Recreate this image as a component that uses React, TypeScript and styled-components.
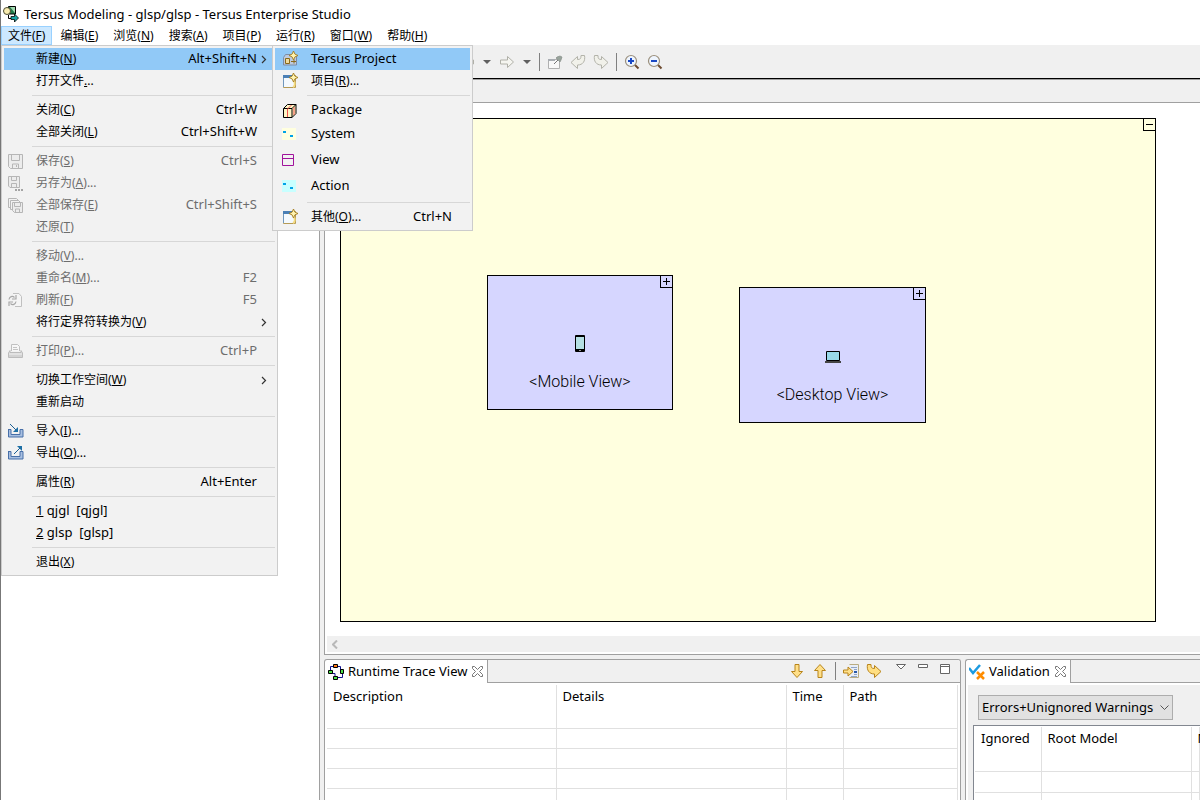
import React from "react";
import styled, { createGlobalStyle, css } from "styled-components";

const line = "#a0a0a0";
const face = "#f0f0f0";

const GlobalStyle = createGlobalStyle`
  * { box-sizing: border-box; }
  body { margin: 0; background: #fff; }
  body, button, select, table {
    font-family: "Noto Sans", "Noto Sans CJK SC", sans-serif;
    font-size: 13px;
    line-height: 16px;
    color: #000;
  }
  button { border: 0; padding: 0; background: none; text-align: left; }
  svg { display: block; flex: none; }
  h1, h2 { margin: 0; font-size: 13px; font-weight: 400; }
`;

const Window = styled.div`
  position: relative;
  display: flex;
  flex-direction: column;
  height: 100vh;
  overflow: hidden;
  border-left: 1px solid #777;
`;
const TitleBar = styled.header`
  display: flex;
  align-items: center;
  gap: 5px;
  height: 26px;
  flex: none;
  padding: 2px 0 0 2px;
`;
const MenuBar = styled.nav`
  display: flex;
  gap: 1px;
  height: 19px;
  flex: none;
`;
const MenuBarItem = styled.button<{ $open?: boolean }>`
  padding: 0 7px;
  font-size: 12px;
  background: ${(p) => (p.$open ? "#cce8ff" : "transparent")};
  box-shadow: inset 0 0 0 1px ${(p) => (p.$open ? "#99d1ff" : "transparent")};
`;
const Toolbar = styled.div`
  display: flex;
  align-items: center;
  gap: 7px;
  height: 33px;
  flex: none;
  padding-left: 458px;
  background: ${face};
`;
const ToolButton = styled.button`
  display: flex;
  align-items: center;
  justify-content: center;
  width: 16px;
  height: 16px;
`;
const CaretButton = styled(ToolButton)`
  width: 10px;
`;
const Divider = styled.span`
  width: 1px;
  height: 18px;
  background: #808080;
`;
const Workbench = styled.div`
  display: flex;
  flex: 1;
  min-height: 0;
  background: ${face};
  gap: 4px;
`;
const Explorer = styled.aside`
  flex: none;
  width: 319px;
  background: #fff;
  border-right: 1px solid ${line};
  border-top: 1px solid #000;
`;
const Main = styled.main`
  display: flex;
  flex-direction: column;
  flex: 1;
  min-width: 0;
  gap: 4px;
`;
const Editor = styled.section`
  flex: none;
  display: flex;
  flex-direction: column;
  border: solid ${line};
  border-width: 0 0 1px 1px;
  background: #fff;
`;
const EditorTabs = styled.div`
  height: 25px;
  border-top: 1px solid #000;
  border-bottom: 1px solid ${line};
  background: ${face};
  box-shadow: inset 0 1px ${line};
`;
const Canvas = styled.div`
  padding: 15px 44px 14px 15px;
`;
const Diagram = styled.div`
  position: relative;
  height: 504px;
  border: 1px solid #000;
  background: #ffffdf;
`;
const Fold = styled.button`
  position: absolute;
  top: -1px;
  right: -1px;
  width: 13px;
  height: 13px;
  border: 1px solid #000;
`;
const Node = styled.article<{ $x: number; $y: number; $w: number; $h: number }>`
  position: absolute;
  left: ${(p) => p.$x}px;
  top: ${(p) => p.$y}px;
  width: ${(p) => p.$w}px;
  height: ${(p) => p.$h}px;
  display: flex;
  flex-direction: column;
  align-items: center;
  justify-content: flex-end;
  gap: 20px;
  padding-bottom: 17px;
  border: 1px solid #000;
  background: #d6d6ff;
`;
const NodeIcon = styled.span`
  display: flex;
  align-items: center;
  height: 17px;
`;
const NodeName = styled.span`
  font: 300 16px/20px Roboto, sans-serif;
  white-space: nowrap;
`;
const ScrollTrack = styled.div`
  display: flex;
  align-items: center;
  height: 16px;
  margin: 0 0 2px 2px;
  padding-left: 5px;
  background: ${face};
`;
const Bottom = styled.div`
  display: flex;
  flex: 1;
  min-height: 0;
  gap: 4px;
`;
const Panel = styled.section<{ $fixed?: boolean }>`
  display: flex;
  flex-direction: column;
  min-width: 0;
  overflow: hidden;
  flex: ${(p) => (p.$fixed ? "0 0 235px" : "1 1 0")};
  border: 1px solid ${line};
  border-bottom: 0;
  border-right-width: ${(p) => (p.$fixed ? 0 : 1)}px;
  border-radius: 3px ${(p) => (p.$fixed ? 0 : 3)}px 0 0;
  background: #fff;
`;
const TabStrip = styled.div`
  display: flex;
  height: 23px;
  flex: none;
`;
const Tab = styled.div`
  display: flex;
  align-items: center;
  gap: 4px;
  padding: 0 4px 0 3px;
  border-right: 1px solid ${line};
  h2 { padding: 0 1px 2px 0; white-space: nowrap; }
`;
const TabTools = styled.div`
  display: flex;
  flex: 1;
  align-items: center;
  justify-content: flex-end;
  gap: 7px;
  padding-right: 7px;
  background: ${face};
  border-bottom: 1px solid ${line};
`;
const ViewButtons = styled.div`
  display: flex;
  gap: 6px;
  margin-left: 4px;
  button { align-items: flex-start; padding-top: 1px; }
`;
const Grid = styled.table<{ $head: number; $row: number }>`
  border-collapse: collapse;
  table-layout: fixed;
  width: 100%;
  th {
    height: ${(p) => p.$head}px;
    padding: 3px 6px;
    font-weight: 400;
    text-align: left;
    vertical-align: top;
    white-space: nowrap;
  }
  td { height: ${(p) => p.$row}px; padding: 0; }
  th, td { border-right: 1px solid #e0e0e0; border-bottom: 1px solid #e0e0e0; }
`;
const TraceBody = styled.div`
  padding: 2px;
`;
const ValidationBody = styled.div`
  flex: 1;
  margin: 2px 0 0 2px;
  padding: 10px 0 0 5px;
  background: ${face};
`;
const FilterBox = styled.div`
  position: relative;
  display: flex;
  align-items: center;
  width: 195px;
  margin: 0 0 5px 5px;
  svg { position: absolute; right: 4px; pointer-events: none; }
`;
const Filter = styled.select`
  appearance: none;
  width: 100%;
  height: 25px;
  padding: 0 3px 2px;
  border: 1px solid #adadad;
  border-radius: 0;
  background: #e1e1e1;
`;
const IssueFrame = styled.div`
  height: 100%;
  padding: 1px 0 0 1px;
  border: solid #828790;
  border-width: 1px 0 0 1px;
  background: #fff;
`;

const Popup = styled.div<{ $x: number; $w: number }>`
  position: absolute;
  left: ${(p) => p.$x}px;
  top: 45px;
  width: ${(p) => p.$w}px;
  padding: 2px;
  border: 1px solid #ccc;
  background: #f2f2f2;
`;
const MenuItem = styled.button<{ $active?: boolean; $tall?: boolean }>`
  display: flex;
  align-items: center;
  width: 100%;
  height: ${(p) => (p.$tall ? 26 : 22)}px;
  font-size: 12px;
  white-space: pre;
  &:disabled { color: #6d6d6d; }
  ${(p) => p.$active && css`background: #91c9f7;`}
`;
const IconSlot = styled.span<{ $w: number; $pad: number }>`
  flex: none;
  width: ${(p) => p.$w}px;
  padding-left: ${(p) => p.$pad}px;
`;
const Label = styled.span<{ $latin?: boolean }>`
  flex: 1;
  font-size: ${(p) => (p.$latin ? 13 : 12)}px;
  padding-bottom: ${(p) => (p.$latin ? 2 : 0)}px;
`;
const Shortcut = styled.span`
  font-size: 13px;
  padding-bottom: 2px;
`;
const ArrowSlot = styled.span`
  width: 18px;
  padding-left: 4px;
`;
const Separator = styled.hr<{ $inset: number }>`
  height: 1px;
  margin: 3px 0 3px ${(p) => p.$inset}px;
  border: 0;
  background: #d7d7d7;
`;

const Svg = ({ w = 16, h = 16, children }: { w?: number; h?: number; children: React.ReactNode }) => (
  <svg width={w} height={h} viewBox={`0 0 ${w} ${h}`} fill="none" aria-hidden="true">{children}</svg>
);

const AppIcon = () => (
  <Svg>
    <path d="M5.500.5h7v7.500h-7z" fill="#1f7a4a" stroke="#000" />
    <path d="M7 1l5 6V1z" fill="#9fd8ae" />
    <circle cx="4" cy="5" r="3.500" fill="#f8ecb0" stroke="#4a4a30" />
    <path d="M5.500 9v3.500H8" stroke="#000" />
    <path d="M8 10.500h3.500V8l4 4-4 4v-2.500H8z" fill="#17a5a5" stroke="#000" strokeWidth=".8" />
  </Svg>
);
const Star = () => <path d="M11.500 0l1.400 3.100L16 4.500l-3.100 1.400L11.500 9l-1.400-3.100L7 4.500l3.100-1.400z" fill="#fff3b0" stroke="#a17b1c" strokeWidth=".9" />;
const NewWindowIcon = () => (
  <Svg>
    <path d="M1.500 2.500h12v12h-12z" fill="#f4f9fd" stroke="#b59a55" />
    <path d="M1 2h9v3H1z" fill="#4a7fb5" />
    <path d="M1.500 5v9" stroke="#6f97bd" />
    <path d="M11 14c2-1 2-4 1-6" stroke="#f5dc82" strokeWidth="2" />
    <Star />
  </Svg>
);
const TersusProjectIcon = () => (
  <Svg>
    <path d="M1.500 6.500l2-3h5l1 1h5v9.500h-13z" fill="#bccadf" stroke="#7d8ca5" />
    <path d="M3.500 7.500h4v5h-4z" fill="#f0dca0" stroke="#8a6a1a" />
    <path d="M9 10.500h5M12 8.500v4" stroke="#8a6a1a" />
    <Star />
  </Svg>
);
const PackageIcon = () => (
  <Svg>
    <path d="M1.500 6.500l4-4h8.500v9l-4 4H1.500z" fill="#fff6c4" stroke="#000" />
    <path d="M1.500 6.500H10v9M10 6.500l4-4" stroke="#000" />
    <path d="M5.500 15V7l4-4M12 13V5" stroke="#f0524f" />
  </Svg>
);
const DotsIcon = ({ tint }: { tint: string }) => (
  <Svg>
    <path d="M0 2h14v12H0z" fill={tint} />
    <path d="M1 5h3v2H1zM8 9h3v2H8z" fill="#00a2e8" />
  </Svg>
);
const ViewIcon = () => (
  <Svg><path d="M.5 2.500h11v11H.5zM.5 6.500h11" stroke="#a0139c" /></Svg>
);
const SaveIcon = () => (
  <Svg>
    <path d="M.5 1.500h14v14h-12l-2-2z" stroke="#b6b6b6" fill="#ececec" />
    <path d="M3.500 1.500v6h8v-6M4.500 15v-4h6v4M8.500 12v2" stroke="#b6b6b6" />
  </Svg>
);
const SaveAsIcon = () => (
  <Svg>
    <path d="M.5 1.500h11v11H2l-1.500-1.500z" stroke="#b6b6b6" fill="#ececec" />
    <path d="M3.500 1.500v4h5v-4M3.500 12V8.500h5V12" stroke="#b6b6b6" />
    <path d="M7 14h2v2H7zM10 14h2v2h-2zM13 14h2v2h-2z" fill="#a4a4a4" />
  </Svg>
);
const SaveAllIcon = () => (
  <Svg>
    <path d="M2.500 10.500h-2v-9h8l2 2M4.500 12.500h-2v-9h8l2 2" stroke="#b6b6b6" />
    <path d="M4.500 5.500h10v10h-8l-2-2z" stroke="#b6b6b6" fill="#ececec" />
    <path d="M6.500 5.500v4h6v-4M7.500 15v-3h4v3" stroke="#b6b6b6" />
  </Svg>
);
const RefreshIcon = () => (
  <Svg>
    <path d="M5 1.500h6l2.500 3v10H7" stroke="#c0c0c0" fill="#f5f5f5" />
    <path d="M1 7.500c.5-3 3.500-4 5.500-2M8 3v4H4M8 9.500c-.5 3-3.500 4-5.500 2M1 14v-4h4" stroke="#a8a8a8" strokeWidth="1.200" />
  </Svg>
);
const PrintIcon = () => (
  <Svg>
    <path d="M3.500 8V1.500h6l2 2V8" stroke="#c0c0c0" fill="#f7f7f7" />
    <path d="M5 4.500h4M5 6.500h5" stroke="#c4c4c4" />
    <path d="M2 7.500L.5 10v4.500h14V10L13 7.500v2H2z" stroke="#bcbcbc" fill="#e2e2e2" />
    <path d="M1 13h13" stroke="#c4c4c4" />
  </Svg>
);
const TrayIcon = ({ out }: { out?: boolean }) => (
  <Svg>
    <path d="M0 6.500h3v5h9v-5h3v7.500H.5V6.500" stroke="#476fa8" fill="#a8bfe0" />
    {out ? (
      <>
        <path d="M6 9l6-6" stroke="#1d5f93" />
        <path d="M9 1h5v5z" fill="#1d6fa5" />
      </>
    ) : (
      <>
        <path d="M2 1l6 6" stroke="#1d5f93" />
        <path d="M10 9H5l5-5z" fill="#1d6fa5" />
      </>
    )}
  </Svg>
);
const Chevron = () => <Svg w={6} h={9}><path d="M1 1l3.500 3.500L1 8" stroke="#333" strokeWidth="1.200" /></Svg>;
const Caret = () => <Svg w={8} h={4}><path d="M0 0h8L4 4z" fill="#606060" /></Svg>;
const FwdIcon = () => <Svg><path d="M1.500 6h7V2.500L14.500 8l-6 5.500V10h-7z" fill="#f5f5f0" stroke="#b0b0a8" /></Svg>;
const BackIcon = () => <Svg><path d="M14.500 6h-7V2.500L1.500 8l6 5.500V10h7z" fill="#f5f5f0" stroke="#b0b0a8" /></Svg>;
const PinIcon = () => (
  <Svg>
    <path d="M1.500 5.500h11v9h-11z" fill="#f8f8f8" stroke="#b0b0b0" />
    <path d="M1 5h7v2H1z" fill="#a9adb2" />
    <path d="M7 10l4-4" stroke="#777" />
    <path d="M9 4l4 4 1-2 1-3-2-1-3 1z" fill="#98a39b" stroke="#888f8a" strokeWidth=".7" />
  </Svg>
);
const bend = "M1.500 1.500H5c0 3 .5 4 3.500 4V2.500L15 8.500l-6.500 6V11C3 11 .5 7 1.500 1.500z";
const UndoIcon = () => <Svg><path transform="matrix(-1 0 0 1 16 0)" d={bend} fill="#f1f1ea" stroke="#b3b3aa" /></Svg>;
const RedoIcon = ({ gold }: { gold?: boolean }) => (
  <Svg><path d={bend} fill={gold ? "#ffdf83" : "#f1f1ea"} stroke={gold ? "#b8841b" : "#b3b3aa"} /></Svg>
);
const ZoomIcon = ({ plus }: { plus?: boolean }) => (
  <Svg>
    <path d="M10 10l4.500 4.500" stroke="#6d4a2f" strokeWidth="2" />
    <circle cx="7" cy="7" r="5.500" fill="#eef5ff" stroke="#9b8f7c" strokeWidth="1.200" />
    <path d={plus ? "M4 7h6M7 4v6" : "M4 7h6"} stroke="#1a48c4" strokeWidth="2" />
  </Svg>
);
const DownIcon = () => <Svg><path d="M6 1.500h4v7h3.500L8 14.500 2.500 8.500H6z" fill="#ffe08a" stroke="#b8841b" /></Svg>;
const UpIcon = () => <Svg><path d="M6 14.500h4v-7h3.500L8 1.500 2.500 7.500H6z" fill="#ffe08a" stroke="#b8841b" /></Svg>;
const StepIcon = () => (
  <Svg>
    <path d="M6.500 1.500h9v13h-9" fill="#e8eef7" stroke="#b9ac82" />
    <path d="M8 4.500h6M11 6.500h3M11 11.500h3M8 13.500h6" stroke="#8fa5c7" />
    <path d="M11 8h3v2h-3z" fill="#2858a8" />
    <path d="M.5 7H5V4l5 4.500L5 13v-3H.5z" fill="#ffe08a" stroke="#b8841b" />
  </Svg>
);
const TraceIcon = () => (
  <Svg>
    <path d="M2.500 7V2.500H12.500V6M14.500 10v3.500H9M4 9.500h3V12" stroke="#10108c" />
    <path d="M5.500.5h4v3h-4z" fill="#ff7a1a" stroke="#000" />
    <path d="M.5 6.500h4v3h-4zM12.500 5.500h3v4h-3zM5.500 12.500h4v3h-4z" fill="#4be04b" stroke="#000" />
  </Svg>
);
const ValidationIcon = () => (
  <Svg>
    <path d="M0 4l4 5 7-8" stroke="#1d9be0" strokeWidth="2.500" />
    <path d="M8 8l7 7M15 8l-7 7" stroke="#ff8c00" strokeWidth="2.500" />
  </Svg>
);
const CloseIcon = () => (
  <Svg w={11} h={11}>
    <path d="M.5.5h2l3 3 3-3h2v2l-3 3 3 3v2h-2l-3-3-3 3h-2v-2l3-3-3-3z" stroke="#777" fill="#fff" />
  </Svg>
);
const ViewMenuIcon = () => <Svg w={10} h={6}><path d="M.5.5h9L5 5z" fill="#fff" stroke="#666" /></Svg>;
const MinimizeIcon = () => <Svg w={10} h={5}><path d="M.5.500h9v3h-9z" fill="#fff" stroke="#666" /></Svg>;
const MaximizeIcon = () => <Svg w={10} h={10}><path d="M.5.500h9v9h-9zM.5 2.500h9" fill="#fff" stroke="#666" /></Svg>;
const PhoneIcon = () => (
  <Svg w={10} h={17}>
    <rect width="10" height="17" rx="1" fill="#000" />
    <path d="M1 2h8v12H1z" fill="#b5dfe3" />
    <path d="M4 15h2v1H4z" fill="#999" />
  </Svg>
);
const LaptopIcon = () => (
  <Svg w={16} h={12}>
    <path d="M1.500.5h13v9h-13z" fill="#99d9ea" stroke="#000" />
    <path d="M0 10h16v2H0z" fill="#444" />
  </Svg>
);
const PlusMinus = ({ plus }: { plus?: boolean }) => (
  <Svg w={11} h={11}><path d={plus ? "M2 5.500h7M5.500 2v7" : "M2 5.500h7"} stroke="#000" /></Svg>
);

/* Menu captions mark their access key with an ampersand. */
const Caption = ({ text }: { text: string }) => {
  const at = text.indexOf("&");
  if (at < 0) return <>{text}</>;
  return <>{text.slice(0, at)}<u>{text[at + 1]}</u>{text.slice(at + 2)}</>;
};

type Entry = {
  text: string;
  keys?: string;
  icon?: React.ReactNode;
  off?: boolean;
  sub?: boolean;
  active?: boolean;
  tall?: boolean;
  latin?: boolean;
};

const fileMenu: Entry[][] = [
  [
    { text: "新建(&N)", keys: "Alt+Shift+N", sub: true, active: true },
    { text: "打开文件&..." },
  ],
  [
    { text: "关闭(&C)", keys: "Ctrl+W" },
    { text: "全部关闭(&L)", keys: "Ctrl+Shift+W" },
  ],
  [
    { text: "保存(&S)", keys: "Ctrl+S", off: true, icon: <SaveIcon /> },
    { text: "另存为(&A)...", off: true, icon: <SaveAsIcon /> },
    { text: "全部保存(&E)", keys: "Ctrl+Shift+S", off: true, icon: <SaveAllIcon /> },
    { text: "还原(&T)", off: true },
  ],
  [
    { text: "移动(&V)...", off: true },
    { text: "重命名(&M)...", keys: "F2", off: true },
    { text: "刷新(&F)", keys: "F5", off: true, icon: <RefreshIcon /> },
    { text: "将行定界符转换为(&V)", sub: true },
  ],
  [{ text: "打印(&P)...", keys: "Ctrl+P", off: true, icon: <PrintIcon /> }],
  [{ text: "切换工作空间(&W)", sub: true }, { text: "重新启动" }],
  [
    { text: "导入(&I)...", icon: <TrayIcon /> },
    { text: "导出(&O)...", icon: <TrayIcon out /> },
  ],
  [{ text: "属性(&R)", keys: "Alt+Enter" }],
  [{ text: "&1 qjgl  [qjgl]", latin: true }, { text: "&2 glsp  [glsp]", latin: true }],
  [{ text: "退出(&X)" }],
];

const newMenu: Entry[][] = [
  [
    { text: "Tersus Project", active: true, latin: true, icon: <TersusProjectIcon /> },
    { text: "项目(&R)...", icon: <NewWindowIcon /> },
  ],
  [
    { text: "Package", latin: true, icon: <PackageIcon /> },
    { text: "System", latin: true, tall: true, icon: <DotsIcon tint="#ffffdf" /> },
    { text: "View", latin: true, tall: true, icon: <ViewIcon /> },
    { text: "Action", latin: true, tall: true, icon: <DotsIcon tint="#c8ffff" /> },
  ],
  [{ text: "其他(&O)...", keys: "Ctrl+N", icon: <NewWindowIcon /> }],
];

type MenuProps = { groups: Entry[][]; x: number; w: number; slot: number; pad: number };
const Menu = ({ groups, x, w, slot, pad }: MenuProps) => (
  <Popup $x={x} $w={w} role="menu">
    {groups.map((group, i) => (
      <React.Fragment key={i}>
        {i > 0 && <Separator $inset={slot - 4} />}
        {group.map((e) => (
          <MenuItem key={e.text} role="menuitem" disabled={e.off} $active={e.active} $tall={e.tall}>
            <IconSlot $w={slot} $pad={pad}>{e.icon}</IconSlot>
            <Label $latin={e.latin}><Caption text={e.text} /></Label>
            {e.keys && <Shortcut>{e.keys}</Shortcut>}
            <ArrowSlot>{e.sub && <Chevron />}</ArrowSlot>
          </MenuItem>
        ))}
      </React.Fragment>
    ))}
  </Popup>
);

const menus = ["文件(&F)", "编辑(&E)", "浏览(&N)", "搜索(&A)", "项目(&P)", "运行(&R)", "窗口(&W)", "帮助(&H)"];

const Rows = ({ count, cols }: { count: number; cols: number }) => (
  <tbody>
    {Array.from({ length: count }, (_, r) => (
      <tr key={r}>{Array.from({ length: cols }, (_, c) => <td key={c} />)}</tr>
    ))}
  </tbody>
);

export default function App() {
  return (
    <Window>
      <GlobalStyle />
      <TitleBar>
        <AppIcon />
        <h1>Tersus Modeling - glsp/glsp - Tersus Enterprise Studio</h1>
      </TitleBar>
      <MenuBar>
        {menus.map((m, i) => (
          <MenuBarItem key={m} $open={i === 0}><Caption text={m} /></MenuBarItem>
        ))}
      </MenuBar>
      <Toolbar>
        <ToolButton aria-label="Back"><BackIcon /></ToolButton>
        <CaretButton aria-label="Back history"><Caret /></CaretButton>
        <ToolButton aria-label="Forward"><FwdIcon /></ToolButton>
        <CaretButton aria-label="Forward history"><Caret /></CaretButton>
        <Divider />
        <ToolButton aria-label="Pin editor"><PinIcon /></ToolButton>
        <ToolButton aria-label="Undo"><UndoIcon /></ToolButton>
        <ToolButton aria-label="Redo"><RedoIcon /></ToolButton>
        <Divider />
        <ToolButton aria-label="Zoom in"><ZoomIcon plus /></ToolButton>
        <ToolButton aria-label="Zoom out"><ZoomIcon /></ToolButton>
      </Toolbar>
      <Workbench>
        <Explorer />
        <Main>
          <Editor>
            <EditorTabs />
            <Canvas>
              <Diagram>
                <Fold aria-label="Collapse"><PlusMinus /></Fold>
                <Node $x={146} $y={156} $w={186} $h={135}>
                  <Fold aria-label="Expand Mobile View"><PlusMinus plus /></Fold>
                  <NodeIcon><PhoneIcon /></NodeIcon>
                  <NodeName>&lt;Mobile View&gt;</NodeName>
                </Node>
                <Node $x={398} $y={168} $w={187} $h={136}>
                  <Fold aria-label="Expand Desktop View"><PlusMinus plus /></Fold>
                  <NodeIcon><LaptopIcon /></NodeIcon>
                  <NodeName>&lt;Desktop View&gt;</NodeName>
                </Node>
              </Diagram>
            </Canvas>
            <ScrollTrack>
              <Svg w={6} h={9}><path d="M5 .5l-4 4 4 4" stroke="#b8b8b8" strokeWidth="2" /></Svg>
            </ScrollTrack>
          </Editor>
          <Bottom>
            <Panel>
              <TabStrip>
                <Tab><TraceIcon /><h2>Runtime Trace View</h2><CloseIcon /></Tab>
                <TabTools>
                  <ToolButton aria-label="Next"><DownIcon /></ToolButton>
                  <ToolButton aria-label="Previous"><UpIcon /></ToolButton>
                  <Divider />
                  <ToolButton aria-label="Step into"><StepIcon /></ToolButton>
                  <ToolButton aria-label="Step over"><RedoIcon gold /></ToolButton>
                  <ViewButtons>
                    <ToolButton aria-label="View menu"><ViewMenuIcon /></ToolButton>
                    <ToolButton aria-label="Minimize"><MinimizeIcon /></ToolButton>
                    <ToolButton aria-label="Maximize"><MaximizeIcon /></ToolButton>
                  </ViewButtons>
                </TabTools>
              </TabStrip>
              <TraceBody>
                <Grid $head={43} $row={20}>
                  <colgroup><col style={{ width: 229 }} /><col style={{ width: 230 }} /><col style={{ width: 57 }} /><col /></colgroup>
                  <thead><tr><th>Description</th><th>Details</th><th>Time</th><th>Path</th></tr></thead>
                  <Rows count={4} cols={4} />
                </Grid>
              </TraceBody>
            </Panel>
            <Panel $fixed>
              <TabStrip>
                <Tab><ValidationIcon /><h2>Validation</h2><CloseIcon /></Tab>
                <TabTools />
              </TabStrip>
              <ValidationBody>
                <FilterBox>
                  <Filter aria-label="Filter"><option>Errors+Unignored Warnings</option></Filter>
                  <Svg w={9} h={6}><path d="M.5.5l4 4 4-4" stroke="#555" /></Svg>
                </FilterBox>
                <IssueFrame>
                  <Grid $head={44} $row={21}>
                    <colgroup><col style={{ width: 66 }} /><col style={{ width: 150 }} /><col /></colgroup>
                    <thead><tr><th>Ignored</th><th>Root Model</th><th>Message</th></tr></thead>
                    <Rows count={3} cols={3} />
                  </Grid>
                </IssueFrame>
              </ValidationBody>
            </Panel>
          </Bottom>
        </Main>
      </Workbench>
      <Menu groups={fileMenu} x={0} w={277} slot={32} pad={4} />
      <Menu groups={newMenu} x={271} w={201} slot={36} pad={7} />
    </Window>
  );
}
